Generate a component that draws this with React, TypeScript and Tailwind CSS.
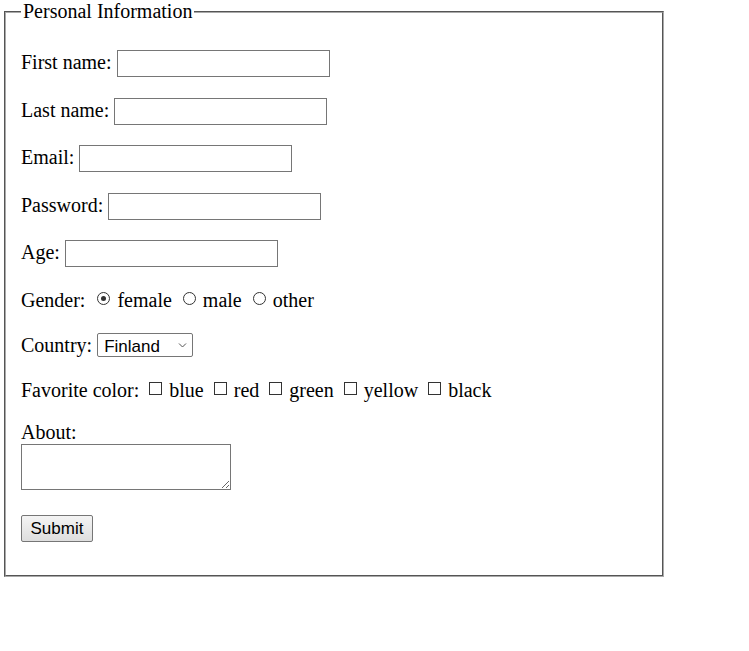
const serif = { fontFamily: '"Liberation Serif", "Times New Roman", serif' };
const sans = { fontFamily: '"Liberation Sans", Arial, sans-serif' };

const TextRow = ({ label, type = 'text', first = false }: { label: string; type?: string; first?: boolean }) => (
  <div className={`flex items-center h-[27px] gap-[5px] ${first ? 'mt-[27px]' : 'mt-[21px]'}`}>
    <label className="leading-[23px] -mt-[2px]">{label}</label>
    <input type={type} className="w-[213px] h-[27px] border border-[#767676] bg-white outline-none" />
  </div>
);

const Radio = ({ checked = false, first = false }: { checked?: boolean; first?: boolean }) => (
  <span
    className={`inline-flex items-center justify-center w-[13px] h-[13px] rounded-full border border-[#333] bg-white mr-[7px] mb-[3px] ${
      first ? 'ml-[12px]' : 'ml-[11px]'
    }`}
  >
    {checked && <span className="block w-[5px] h-[5px] rounded-full bg-[#333]" />}
  </span>
);

const Check = () => (
  <span className="inline-block w-[13px] h-[13px] border border-[#333] bg-white ml-[10px] mr-[7px] mb-[4px]" />
);

export default function App() {
  return (
    <div className="bg-white w-[749px] h-[651px] text-black text-[20px]" style={serif}>
      <fieldset className="ml-[4px] w-[660px] border-2 [border-style:groove] border-[#a9a9a9] px-[15px] pb-[33px]">
        <legend className="px-[2px] leading-[23px]">Personal Information</legend>
        <div className="flex flex-col">
          <TextRow label="First name:" first />
          <TextRow label="Last name:" />
          <div className="mt-[-1px]">
            <TextRow label="Email:" type="email" />
          </div>
          <TextRow label="Password:" type="password" />
          <div className="mt-[-1px]">
            <TextRow label="Age:" type="number" />
          </div>

          <div className="flex items-center h-[24px] mt-[21px]">
            <span className="leading-[23px]">Gender:</span>
            <Radio checked first />
            <span className="leading-[23px]">female</span>
            <Radio />
            <span className="leading-[23px]">male</span>
            <Radio />
            <span className="leading-[23px]">other</span>
          </div>

          <div className="flex items-center h-[24px] mt-[21px] gap-[5px]">
            <span className="leading-[23px]">Country:</span>
            <div className="relative flex">
              <select
                className="appearance-none w-[96px] h-[24px] border border-[#767676] rounded-[2px] bg-white pl-[6px] text-[17px] text-black outline-none"
                style={sans}
                defaultValue="Finland"
              >
                <option>Finland</option>
                <option>Sweden</option>
                <option>Norway</option>
              </select>
              <svg className="absolute right-[6px] top-[10px] pointer-events-none" width="9" height="5" viewBox="0 0 9 5">
                <path d="M1 0.5 L4.5 4 L8 0.5" fill="none" stroke="#555" strokeWidth="1" />
              </svg>
            </div>
          </div>

          <div className="flex items-center h-[24px] mt-[21px]">
            <span className="leading-[23px]">Favorite color:</span>
            <Check />
            <span className="leading-[23px]">blue</span>
            <Check />
            <span className="leading-[23px]">red</span>
            <Check />
            <span className="leading-[23px]">green</span>
            <Check />
            <span className="leading-[23px]">yellow</span>
            <Check />
            <span className="leading-[23px]">black</span>
          </div>

          <label className="mt-[19px] leading-[23px] h-[23px]">About:</label>
          <textarea className="w-[210px] h-[46px] border border-[#767676] bg-white resize outline-none" />

          <div className="flex mt-[25px]">
            <button
              type="button"
              className="w-[72px] h-[27px] border border-[#767676] rounded-[2px] bg-linear-to-b from-[#f4f4f4] to-[#dedede] text-[17px] text-black"
              style={sans}
            >
              Submit
            </button>
          </div>
        </div>
      </fieldset>
    </div>
  );
}
